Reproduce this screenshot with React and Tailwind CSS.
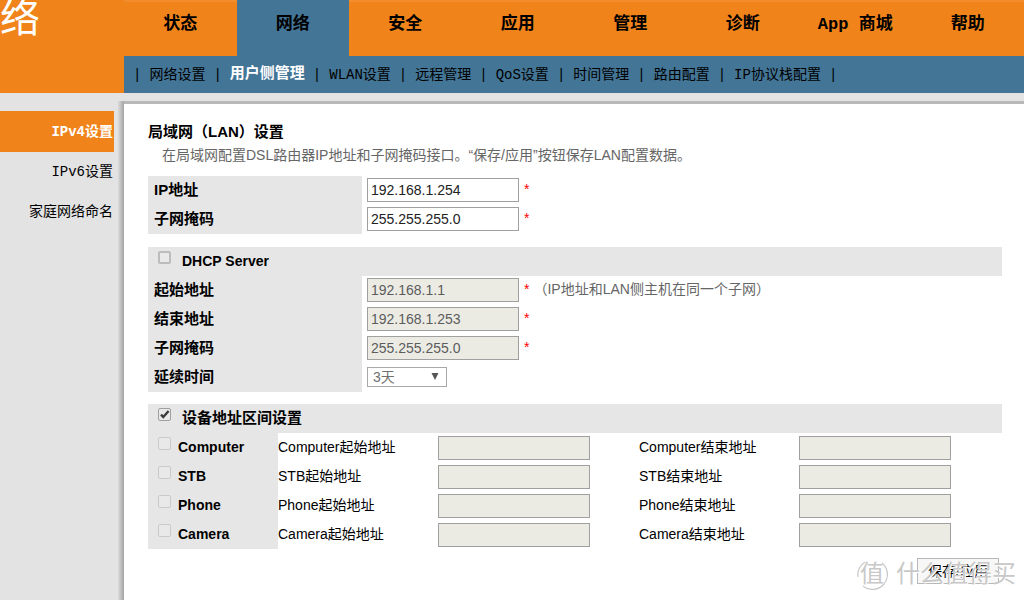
import { useState } from 'react'

const mainMenu = ['状态', '网络', '安全', '应用', '管理', '诊断', 'App 商城', '帮助']

const subMenu = ['网络设置', '用户侧管理', 'WLAN设置', '远程管理', 'QoS设置', '时间管理', '路由配置', 'IP协议栈配置']

const sideMenu = ['IPv4设置', 'IPv6设置', '家庭网络命名']

const devices = ['Computer', 'STB', 'Phone', 'Camera']

const Checkbox = ({ id, ...props }) => (
  <span className="relative mb-1.5 block h-[13px] w-[13px] shrink-0">
    <input
      id={id}
      type="checkbox"
      className="peer block h-[13px] w-[13px] appearance-none rounded-xs border-2 border-[#bcbcbc] bg-[#e9e9e9] checked:border checked:border-[#a0a0a0] disabled:border disabled:border-[#cacaca]"
      {...props}
    />
    <svg
      viewBox="0 0 13 13"
      className="pointer-events-none absolute inset-0 hidden h-[13px] w-[13px] peer-checked:block"
      fill="none"
      stroke="#3c3c3c"
      strokeWidth="2.4"
    >
      <path d="M3 6.6 L5.3 9 L10.6 3" />
    </svg>
  </span>
)

const TextBox = (props) => (
  <input
    type="text"
    className="h-6 w-[152px] border border-[#a0a0a0] bg-white px-[3px] text-sm text-[#222] disabled:bg-[#ebebe4] disabled:text-[#5c5c5c]"
    {...props}
  />
)

const Row = ({ id, label, required, note, children }) => (
  <div className="flex h-[29px]">
    <label htmlFor={id} className="flex w-[214px] shrink-0 items-center bg-[#e6e6e6] pb-0.5 pl-1.5 text-[15px] font-bold">
      {label}
    </label>
    <div className="flex items-center pb-px pl-[5px]">
      {children}
      {required && <span className="pb-0.5 pl-[5px] text-[#f00]">*</span>}
      {note && <span className="pb-0.5 pl-1 text-[#666]">{note}</span>}
    </div>
  </div>
)

const SectionBar = ({ id, label, className, ...props }) => (
  <div className="flex h-[29px] items-center bg-[#e6e6e6] pb-0.5 pl-2.5">
    <Checkbox id={id} {...props} />
    <label htmlFor={id} className={`pl-[11px] font-bold ${className}`}>{label}</label>
  </div>
)

const Header = () => (
  <header className="flex h-[93px] bg-[#f0831a]">
    <h1 className="w-[124px] shrink-0 text-[40px] leading-11 text-white">络</h1>
    <div className="flex min-w-0 flex-1 flex-col">
      <nav className="flex h-14 border-t-2 border-[#f38d2b]">
        {mainMenu.map((item) => (
          <a
            key={item}
            href="#"
            className={`-mt-0.5 flex-1 pt-[13px] text-center text-[17px] leading-6 font-bold whitespace-nowrap ${
              item === '网络' ? 'bg-[#437596]' : ''
            }`}
          >
            {item}
          </a>
        ))}
      </nav>
      <nav className="flex flex-1 items-center gap-2 bg-[#437596] pl-[9px] text-sm whitespace-nowrap">
        <span>|</span>
        {subMenu.map((item) => (
          <div key={item} className="flex items-center gap-2">
            <a href="#" className={item === '用户侧管理' ? 'text-[15px] leading-5 font-bold text-white' : ''}>{item}</a>
            <span>|</span>
          </div>
        ))}
      </nav>
    </div>
  </header>
)

const Sidebar = () => (
  <nav className="w-[114px] shrink-0 pt-[18px]">
    {sideMenu.map((item, i) => (
      <a
        key={item}
        href="#"
        className={`flex items-center justify-end pr-px ${i === 0 ? 'h-[41px] bg-[#f0831a] font-bold text-white' : 'h-10'}`}
      >
        {item}
      </a>
    ))}
  </nav>
)

const Watermark = () => (
  <div className="pointer-events-none absolute top-0 -right-3.5 flex h-8 items-center gap-2 text-[24px] whitespace-nowrap text-[#c8c8c8]">
    <div className="relative flex h-8 w-8 items-center justify-center">
      <svg viewBox="0 0 32 32" className="absolute inset-0" fill="none" stroke="currentColor" strokeWidth="1.2">
        <path d="M26 5 A14.5 14.5 0 0 1 7 28" />
        <path d="M2 19 A14.5 14.5 0 0 1 9 4" />
      </svg>
      <span>值</span>
    </div>
    <span className="text-shadow-[1px_1px_0_#fff]">什么值得买</span>
  </div>
)

const App = () => {
  const [dhcp, setDhcp] = useState(false)
  const [ranges, setRanges] = useState(true)

  return (
    <div className="flex min-h-screen flex-col bg-[#e3e3e3] font-['Liberation_Mono','Noto_Sans_CJK_SC',monospace] text-sm text-black">
      <Header />
      <div className="flex flex-1">
        <Sidebar />
        {/* soft edge on the left of the content panel */}
        <div className="mt-2 ml-1 w-1.5 bg-linear-to-r from-[#dcdcdc] to-[#a4a4a4]" />
        <main className="mt-2 flex-1 border-t-[3px] border-[#b8b8b8] bg-white pr-[22px] pl-6 font-['Liberation_Sans','Noto_Sans_CJK_SC',sans-serif]">
          <h2 className="pt-4 text-[15px] leading-6 font-bold">局域网（LAN）设置</h2>
          <p className="pl-3.5 leading-[22px] text-[#666]">
            在局域网配置DSL路由器IP地址和子网掩码接口。“保存/应用”按钮保存LAN配置数据。
          </p>

          <form onSubmit={(e) => e.preventDefault()}>
            <section className="pt-2.5">
              <Row id="ip" label="IP地址" required>
                <TextBox id="ip" defaultValue="192.168.1.254" />
              </Row>
              <Row id="mask" label="子网掩码" required>
                <TextBox id="mask" defaultValue="255.255.255.0" />
              </Row>
            </section>

            <section className="pt-[13px]">
              <SectionBar
                id="dhcp"
                label="DHCP Server"
                className="text-sm"
                checked={dhcp}
                onChange={(e) => setDhcp(e.target.checked)}
              />
              <Row id="start" label="起始地址" required note="（IP地址和LAN侧主机在同一个子网）">
                <TextBox id="start" defaultValue="192.168.1.1" disabled={!dhcp} />
              </Row>
              <Row id="end" label="结束地址" required>
                <TextBox id="end" defaultValue="192.168.1.253" disabled={!dhcp} />
              </Row>
              <Row id="dhcpMask" label="子网掩码" required>
                <TextBox id="dhcpMask" defaultValue="255.255.255.0" disabled={!dhcp} />
              </Row>
              <Row id="lease" label="延续时间">
                <div className="relative">
                  <select
                    id="lease"
                    disabled={!dhcp}
                    className="block h-5 w-20 appearance-none border border-[#a9a9a9] bg-white pl-[5px] text-sm leading-4 text-[#707070]"
                  >
                    <option>3天</option>
                  </select>
                  <svg viewBox="0 0 8 7" className="pointer-events-none absolute top-1.5 right-2 h-[7px] w-2" fill="#555">
                    <path d="M0.5 0 H7.5 L4 7 Z" />
                  </svg>
                </div>
              </Row>
            </section>

            <section className="pt-3">
              <SectionBar
                id="ranges"
                label="设备地址区间设置"
                className="text-[15px]"
                checked={ranges}
                onChange={(e) => setRanges(e.target.checked)}
              />
              {devices.map((name) => (
                <div key={name} className="grid h-[29px] grid-cols-[130px_160px_201px_160px_1fr] items-center">
                  <div className="flex h-full items-center bg-[#e6e6e6] pb-0.5 pl-2.5">
                    <Checkbox id={name} disabled />
                    <label htmlFor={name} className="pl-[7px] font-bold">{name}</label>
                  </div>
                  <label htmlFor={`${name}-start`} className="pb-0.5">{name}起始地址</label>
                  <TextBox id={`${name}-start`} disabled />
                  <label htmlFor={`${name}-end`} className="pb-0.5">{name}结束地址</label>
                  <TextBox id={`${name}-end`} disabled />
                </div>
              ))}
            </section>

            <div className="relative mt-[9px] flex justify-end pr-[3px]">
              <button type="submit" className="h-[26px] w-[82px] border border-[#b8b8b8] bg-[#f7f7f7] text-sm">
                保存/应用
              </button>
              <Watermark />
            </div>
          </form>
        </main>
      </div>
    </div>
  )
}

export default App
